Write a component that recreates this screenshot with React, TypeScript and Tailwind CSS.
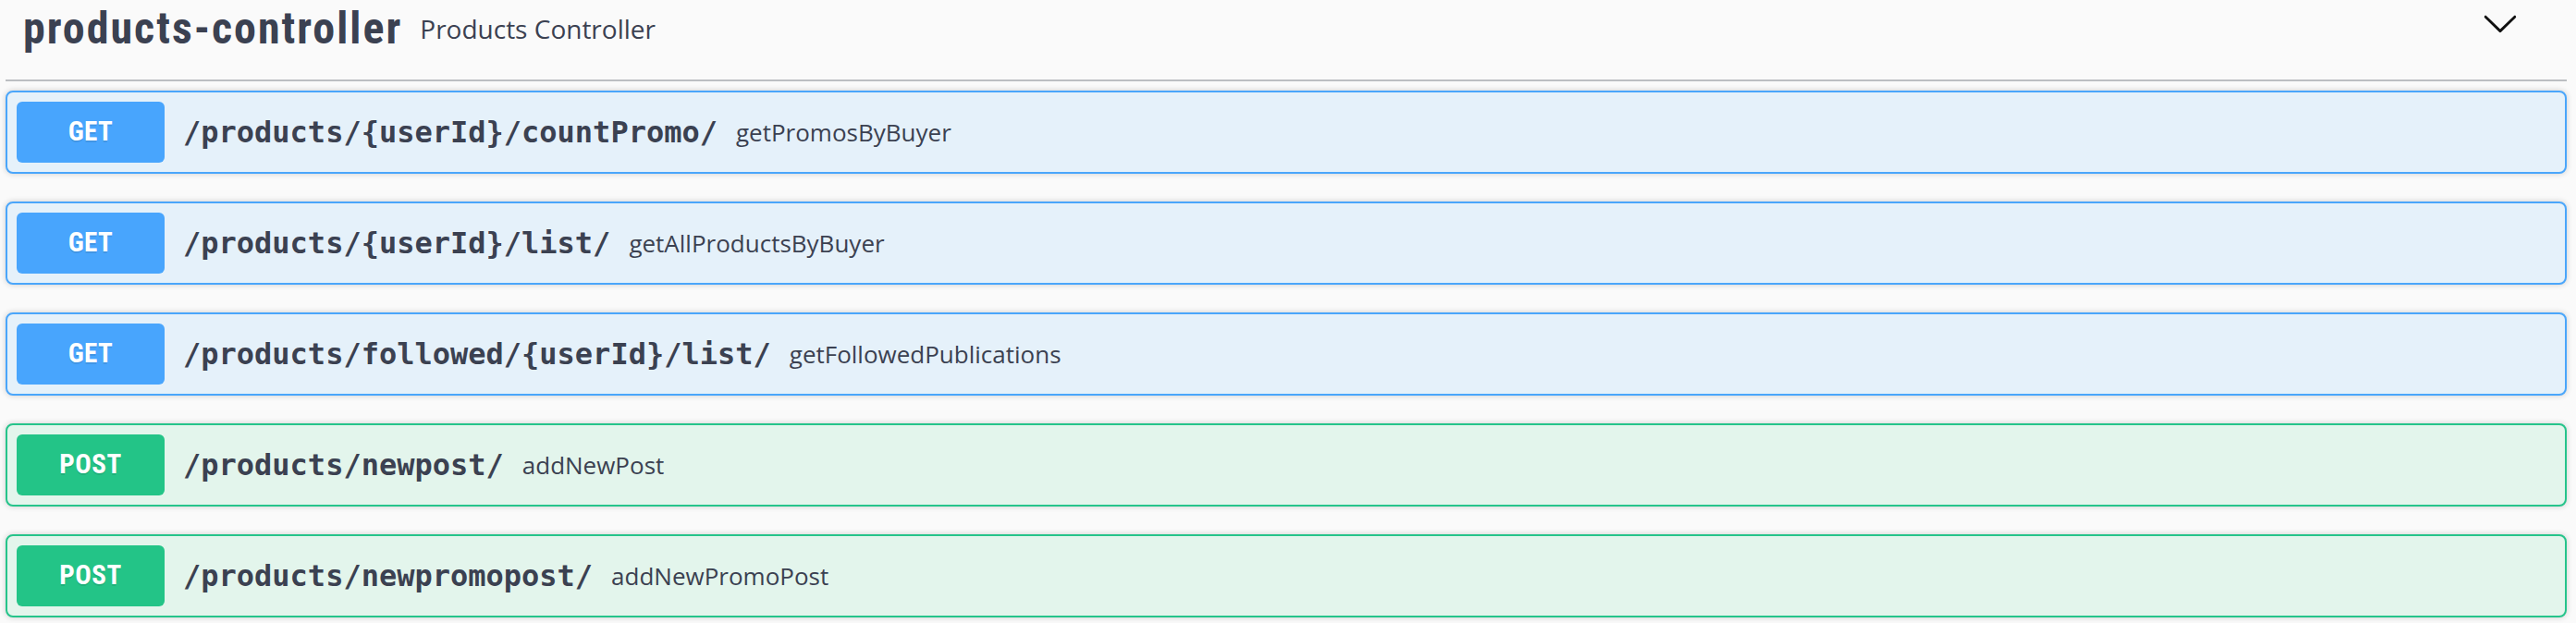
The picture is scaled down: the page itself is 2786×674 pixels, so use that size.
const ops = [
  { method: "GET", path: "/products/{userId}/countPromo/", summary: "getPromosByBuyer" },
  { method: "GET", path: "/products/{userId}/list/", summary: "getAllProductsByBuyer" },
  { method: "GET", path: "/products/followed/{userId}/list/", summary: "getFollowedPublications" },
  { method: "POST", path: "/products/newpost/", summary: "addNewPost" },
  { method: "POST", path: "/products/newpromopost/", summary: "addNewPromoPost" },
];

function Chevron() {
  return (
    <svg width="40" height="40" viewBox="0 0 20 20" className="mt-[5px] shrink-0">
      <path
        fill="#111"
        d="M17.418 6.109c.272-.268.709-.268.979 0s.271.701 0 .969l-7.908 7.83c-.27.268-.707.268-.979 0l-7.908-7.83c-.27-.268-.27-.701 0-.969.271-.268.709-.268.979 0L10 13.25l7.418-7.141z"
      />
    </svg>
  );
}

function Operation({ method, path, summary }: { method: string; path: string; summary: string }) {
  const isGet = method === "GET";
  return (
    <div
      className={`flex h-[90px] items-center rounded-[8px] border-2 px-[10px] shadow-[0_0_6px_rgba(0,0,0,0.19)] ${
        isGet ? "border-[#4aa6fb] bg-[#e5f1fa]" : "border-[#26c48b] bg-[#e3f5ec]"
      }`}
    >
      <span
        className={`flex h-[66px] w-[160px] shrink-0 items-center justify-center rounded-[6px] font-['Roboto_Condensed',Roboto,sans-serif] text-[29px] font-bold tracking-[0.5px] text-white [text-shadow:0_2px_0_rgba(0,0,0,0.1)] ${
          isGet ? "bg-[#48a5fd]" : "bg-[#23c487]"
        }`}
      >
        {method}
      </span>
      <span className="px-[20px] font-['DejaVu_Sans_Mono',monospace] text-[32px] font-bold text-[#3b4151]">{path}</span>
      <span className="font-['Open_Sans',sans-serif] text-[26px] text-[#3b4151]">{summary}</span>
    </div>
  );
}

export default function App() {
  return (
    <div className="min-h-screen bg-[#fafafa] text-[#3b4151]">
      <div className="ml-[6px] mr-[10px]">
        <div className="flex h-[88px] items-start border-b-2 border-[#bcbec2] pl-[19px] pr-[52px]">
          <span className="mt-[7px] font-['Roboto_Condensed',Roboto,sans-serif] text-[48px] font-bold leading-none tracking-[2px]">
            products-controller
          </span>
          <span className="ml-[19px] mt-[17px] font-['Open_Sans',sans-serif] text-[28px] leading-none">Products Controller</span>
          <span className="flex-1" />
          <Chevron />
        </div>
        <div className="mt-[10px] flex flex-col gap-[30px]">
          {ops.map((op) => (
            <Operation key={op.path} {...op} />
          ))}
        </div>
      </div>
    </div>
  );
}
